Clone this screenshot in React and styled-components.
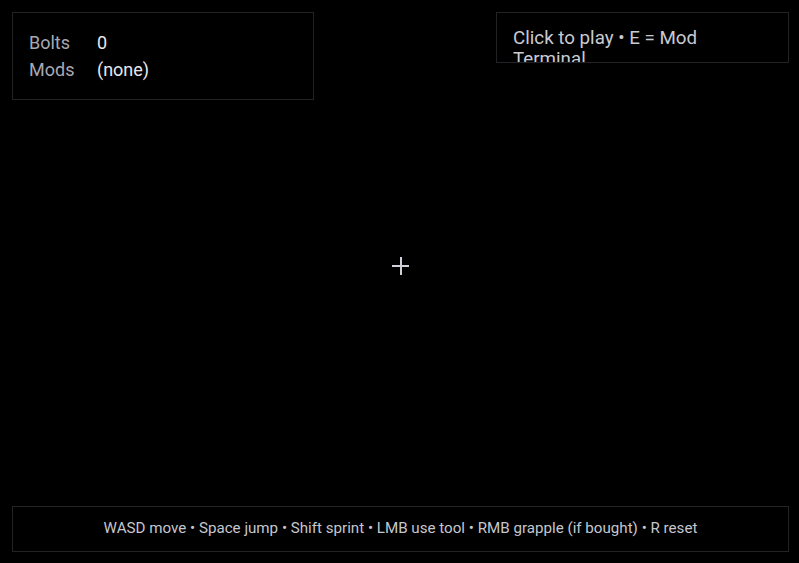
import styled, { createGlobalStyle } from 'styled-components'

const GlobalStyle = createGlobalStyle`
    html, body {
        margin: 0;
        padding: 0;
        background: #000;
        height: 100%;
    }
    #root {
        height: 100%;
    }
`

const stats = [
    { label: 'Bolts', value: '0' },
    { label: 'Mods', value: '(none)' },
]

const App = () => {
    return (
        <Screen>
            <GlobalStyle />
            <TopRow>
                <StatsPanel>
                    {stats.map((s) => (
                        <StatRow key={s.label}>
                            <StatLabel>{s.label}</StatLabel>
                            <StatValue>{s.value}</StatValue>
                        </StatRow>
                    ))}
                </StatsPanel>
                <HintPanel>Click to play • E = Mod Terminal</HintPanel>
            </TopRow>

            <Middle />

            <ControlsBar>
                WASD move • Space jump • Shift sprint • LMB use tool • RMB grapple (if bought) • R reset
            </ControlsBar>

            <Crosshair />
        </Screen>
    )
}

export default App

const Screen = styled.div`
    position: relative;
    box-sizing: border-box;
    height: 100vh;
    padding: 12px 10px 11px 12px;
    display: flex;
    flex-direction: column;
    background: #000;
    font-family: Roboto, "Liberation Sans", sans-serif;
    overflow: hidden;
`

const TopRow = styled.div`
    display: flex;
    justify-content: space-between;
    align-items: flex-start;
`

const Panel = styled.div`
    box-sizing: border-box;
    border: 1px solid #232327;
    background: rgba(0, 0, 0, 0.55);
`

const StatsPanel = styled(Panel)`
    width: 302px;
    padding: 16px;
    display: grid;
    grid-template-columns: 68px 1fr;
    font-size: 18px;
    line-height: 27px;
`

const StatRow = styled.div`
    display: contents;
`

const StatLabel = styled.span`
    color: #a8a9b3;
`

const StatValue = styled.span`
    color: #e8e8ef;
`

const HintPanel = styled(Panel)`
    width: 293px;
    height: 51px;
    padding: 15px 20px 0 16px;
    overflow: hidden;
    font-size: 18.75px;
    line-height: 21px;
    color: #c9cad2;
`

const Middle = styled.div`
    flex: 1;
`

const ControlsBar = styled(Panel)`
    padding: 11px 16px 13px;
    text-align: center;
    font-size: 15.15px;
    line-height: 20px;
    color: #c6c7ce;
`

const Crosshair = styled.div`
    position: absolute;
    left: 392px;
    top: 257px;
    width: 17px;
    height: 18px;
    pointer-events: none;

    &::before, &::after {
        content: '';
        position: absolute;
        background: #cfd0d8;
    }
    &::before {
        left: 0;
        right: 0;
        top: 7.5px;
        height: 2.5px;
    }
    &::after {
        top: 0;
        bottom: 0;
        left: 7.5px;
        width: 2.5px;
    }
`
